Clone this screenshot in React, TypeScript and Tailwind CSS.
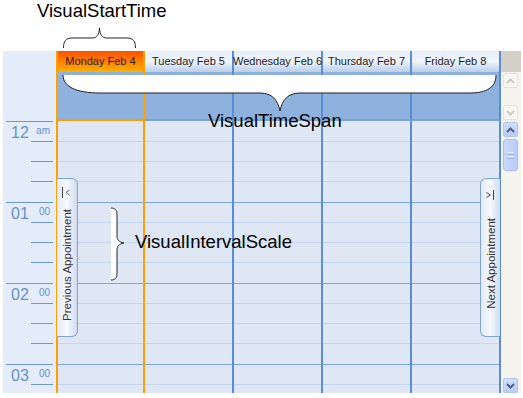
import React from 'react';

const ROW: Record<string, string> = {
  first: 'h-[21px] shrink-0 border-b border-[#c4d6f0]',
  minor: 'h-[20px] shrink-0 border-b border-[#c4d6f0]',
  major: 'h-[21px] shrink-0 border-b border-[#7ea6dc]',
};
const rows = ['first', 'minor', 'minor', 'major', 'minor', 'minor', 'minor', 'major', 'minor', 'minor', 'minor', 'major', 'minor', 'minor'];

function DayBody({ className, children }: { className: string; children?: React.ReactNode }) {
  return (
    <div className={`relative flex flex-col overflow-visible bg-[#dfe7f5] ${className}`}>
      <div className="flex flex-col overflow-hidden h-full">
        {rows.map((r, i) => (
          <div key={i} className={ROW[r]} />
        ))}
      </div>
      {children}
    </div>
  );
}

function Chevron({ up, color }: { up: boolean; color: string }) {
  return (
    <svg width="9" height="6" viewBox="0 0 9 6">
      <polyline points={up ? '1,5 4.5,1.5 8,5' : '1,1 4.5,4.5 8,1'} fill="none" stroke={color} strokeWidth="2" />
    </svg>
  );
}

function HourBlock({ h, s }: { h: string; s: string }) {
  return (
    <div className="h-[81px] shrink-0 flex flex-col">
      <div className="h-px ml-[3px] w-[47px] bg-[#6b97d6]" />
      <div className="h-[19px] flex items-start">
        <span className="ml-[8px] mt-[3px] text-[16px] leading-none text-[#6690d0]">{h}</span>
        <span className="ml-auto mr-[6px] mt-[4px] text-[10px] leading-none text-[#6690d0]">{s}</span>
      </div>
      <div className="h-px ml-[28px] w-[22px] bg-[#6b97d6]" />
      <div className="h-[19px]" />
      <div className="h-px ml-[28px] w-[22px] bg-[#6b97d6]" />
      <div className="h-[19px]" />
      <div className="h-px ml-[28px] w-[22px] bg-[#6b97d6]" />
      <div className="h-[20px]" />
    </div>
  );
}

const headerCls =
  'h-[21px] border-r-2 border-[#5b8dd6] bg-linear-to-b from-[#e6edf7] via-[#f1f5fb] to-[#b9cdea] flex items-center justify-center text-[11px] text-[#222] whitespace-nowrap';
const allDayCls = 'border-r-2 border-r-[#5b8dd6] border-b-2 border-b-[#7aa3dc] bg-[#8eb1dd]';

export default function App() {
  return (
    <div className="relative w-[523px] h-[398px] bg-white overflow-hidden font-['Liberation_Sans',Arial,sans-serif]">
      <div className="h-[51px] pl-[37px] pt-[2px] text-[18.5px] leading-none text-black">VisualStartTime</div>

      <div className="ml-[3px] grid grid-cols-[53px_89px_89px_89px_89px_89px_20px] grid-rows-[21px_49px_272px]">
        {/* row 1 */}
        <div className="row-span-2 bg-[#e4ecfa]" />
        <div className="h-[21px] border-x-2 border-[#ffa000] bg-linear-to-b from-[#ff4f00] via-[#ff8000] to-[#ffb200] flex items-center justify-center text-[11px] text-[#222] whitespace-nowrap">
          Monday Feb 4
        </div>
        <div className={headerCls}>Tuesday Feb 5</div>
        <div className={headerCls}>Wednesday Feb 6</div>
        <div className={headerCls}>Thursday Feb 7</div>
        <div className={headerCls}>Friday Feb 8</div>
        <div className="bg-[#d4d0c8]" />

        {/* row 2 */}
        <div className="border-x-2 border-b-2 border-[#ffa000] bg-[#8eb1dd]" />
        <div className={allDayCls} />
        <div className={allDayCls} />
        <div className={allDayCls} />
        <div className={allDayCls} />
        <div className="bg-[#f4f3ee] flex flex-col pl-[2px] pt-[1px] pb-[1px] justify-between">
          <div className="w-[15px] h-[15px] rounded-[2px] border border-[#e6e4da] bg-[#f7f6f2] flex items-center justify-center">
            <Chevron up color="#cfcdc2" />
          </div>
          <div className="w-[15px] h-[15px] rounded-[2px] border border-[#e6e4da] bg-[#f7f6f2] flex items-center justify-center">
            <Chevron up={false} color="#cfcdc2" />
          </div>
        </div>

        {/* row 3 */}
        <div className="bg-[#e4ecfa] flex flex-col overflow-hidden">
          <HourBlock h="12" s="am" />
          <HourBlock h="01" s="00" />
          <HourBlock h="02" s="00" />
          <HourBlock h="03" s="00" />
        </div>
        <DayBody className="border-x-2 border-[#ffa000]">
          <div className="absolute left-[-1px] top-[57px] w-[21px] h-[159px] rounded-r-[6px] border border-l-0 border-[#7fa4d9] bg-linear-to-r from-[#e3ebf7] via-[#f6f8fc] to-[#cfdcf1] flex flex-col">
            <svg className="mt-[8px] shrink-0" width="20" height="12" viewBox="0 0 20 12">
              <line x1="5.5" y1="0" x2="5.5" y2="11" stroke="#444" strokeWidth="1" />
              <polyline points="12.5,3 9,5.5 12.5,8" fill="none" stroke="#666" strokeWidth="1" />
            </svg>
            <span className="mt-[10px] ml-[5px] [writing-mode:vertical-rl] rotate-180 text-[11.5px] leading-none text-[#333] whitespace-nowrap">
              Previous Appointment
            </span>
          </div>
        </DayBody>
        <DayBody className="border-r-2 border-[#5b8dd6]" />
        <DayBody className="border-r-2 border-[#5b8dd6]" />
        <DayBody className="border-r-2 border-[#5b8dd6]" />
        <DayBody className="border-r-2 border-[#5b8dd6]">
          <div className="absolute right-[-1px] top-[57px] w-[20px] h-[159px] rounded-l-[6px] border border-r-0 border-[#7fa4d9] bg-linear-to-r from-[#e3ebf7] via-[#f6f8fc] to-[#cfdcf1] flex flex-col">
            <svg className="mt-[10px] shrink-0" width="19" height="12" viewBox="0 0 19 12">
              <polyline points="5.5,3.5 9.5,6 5.5,8.5" fill="none" stroke="#444" strokeWidth="1" />
              <line x1="12.5" y1="1" x2="12.5" y2="11" stroke="#444" strokeWidth="1" />
            </svg>
            <span className="mt-[17px] ml-[5px] [writing-mode:vertical-rl] rotate-180 text-[11.5px] leading-none text-[#333] whitespace-nowrap">
              Next Appointment
            </span>
          </div>
        </DayBody>
        <div className="bg-[#f4f3ee] flex flex-col pl-[2px] pt-[1px]">
          <div className="w-[15px] h-[15px] rounded-[2px] border border-[#b2c6f4] bg-linear-to-b from-[#d2defd] to-[#b9cbf7] flex items-center justify-center">
            <Chevron up color="#4d6185" />
          </div>
          <div className="mt-[2px] w-[15px] h-[32px] rounded-[3px] border border-[#a9bef2] bg-linear-to-r from-[#c9d8fd] to-[#b8cbf8] flex flex-col items-center justify-center gap-[1px]">
            <div className="w-[7px] h-px bg-[#e9effd]" />
            <div className="w-[7px] h-px bg-[#9fb5ec]" />
            <div className="w-[7px] h-px bg-[#e9effd]" />
            <div className="w-[7px] h-px bg-[#9fb5ec]" />
          </div>
          <div className="flex-1" />
          <div className="w-[15px] h-[15px] rounded-[2px] border border-[#b2c6f4] bg-linear-to-b from-[#d2defd] to-[#b9cbf7] flex items-center justify-center">
            <Chevron up={false} color="#4d6185" />
          </div>
        </div>
      </div>

      {/* annotations */}
      <div className="absolute left-[208px] top-[112px] text-[18.5px] leading-none text-black whitespace-nowrap">VisualTimeSpan</div>
      <div className="absolute left-[135px] top-[233px] text-[18.5px] leading-none text-black whitespace-nowrap">VisualIntervalScale</div>
      <svg className="absolute left-0 top-0 pointer-events-none" width="523" height="398" viewBox="0 0 523 398">
        <path
          d="M63.5,48 C63.5,41 66,38 72,38 L92,38 C97,38 99,35 99.5,28 C100,35 102,38 107,38 L127,38 C133,38 135.5,41 135.5,48"
          fill="none"
          stroke="#222"
          strokeWidth="1"
        />
        <path
          d="M63,75 L496,75 C496,87 487,93 470,93 L300,93 C288,93 282,100 280,111 C278,100 272,93 260,93 L100,93 C75,93 63,86 63,75 Z"
          fill="#fff"
          stroke="none"
        />
        <path
          d="M63,75 C63,86 75,93 100,93 L260,93 C272,93 278,100 280,111 C282,100 288,93 300,93 L470,93 C487,93 496,87 496,75"
          fill="none"
          stroke="#222"
          strokeWidth="1"
        />
        <path
          d="M111,208 C115,208 117,210 117,214 L117,236 C117,240 119,242 124,243 C119,244 117,246 117,250 L117,274 C117,278 115,280 111,280 Z"
          fill="#fff"
          stroke="none"
        />
        <path
          d="M111,208 C115,208 117,210 117,214 L117,236 C117,240 119,242 124,243 C119,244 117,246 117,250 L117,274 C117,278 115,280 111,280"
          fill="none"
          stroke="#222"
          strokeWidth="1"
        />
      </svg>
    </div>
  );
}
